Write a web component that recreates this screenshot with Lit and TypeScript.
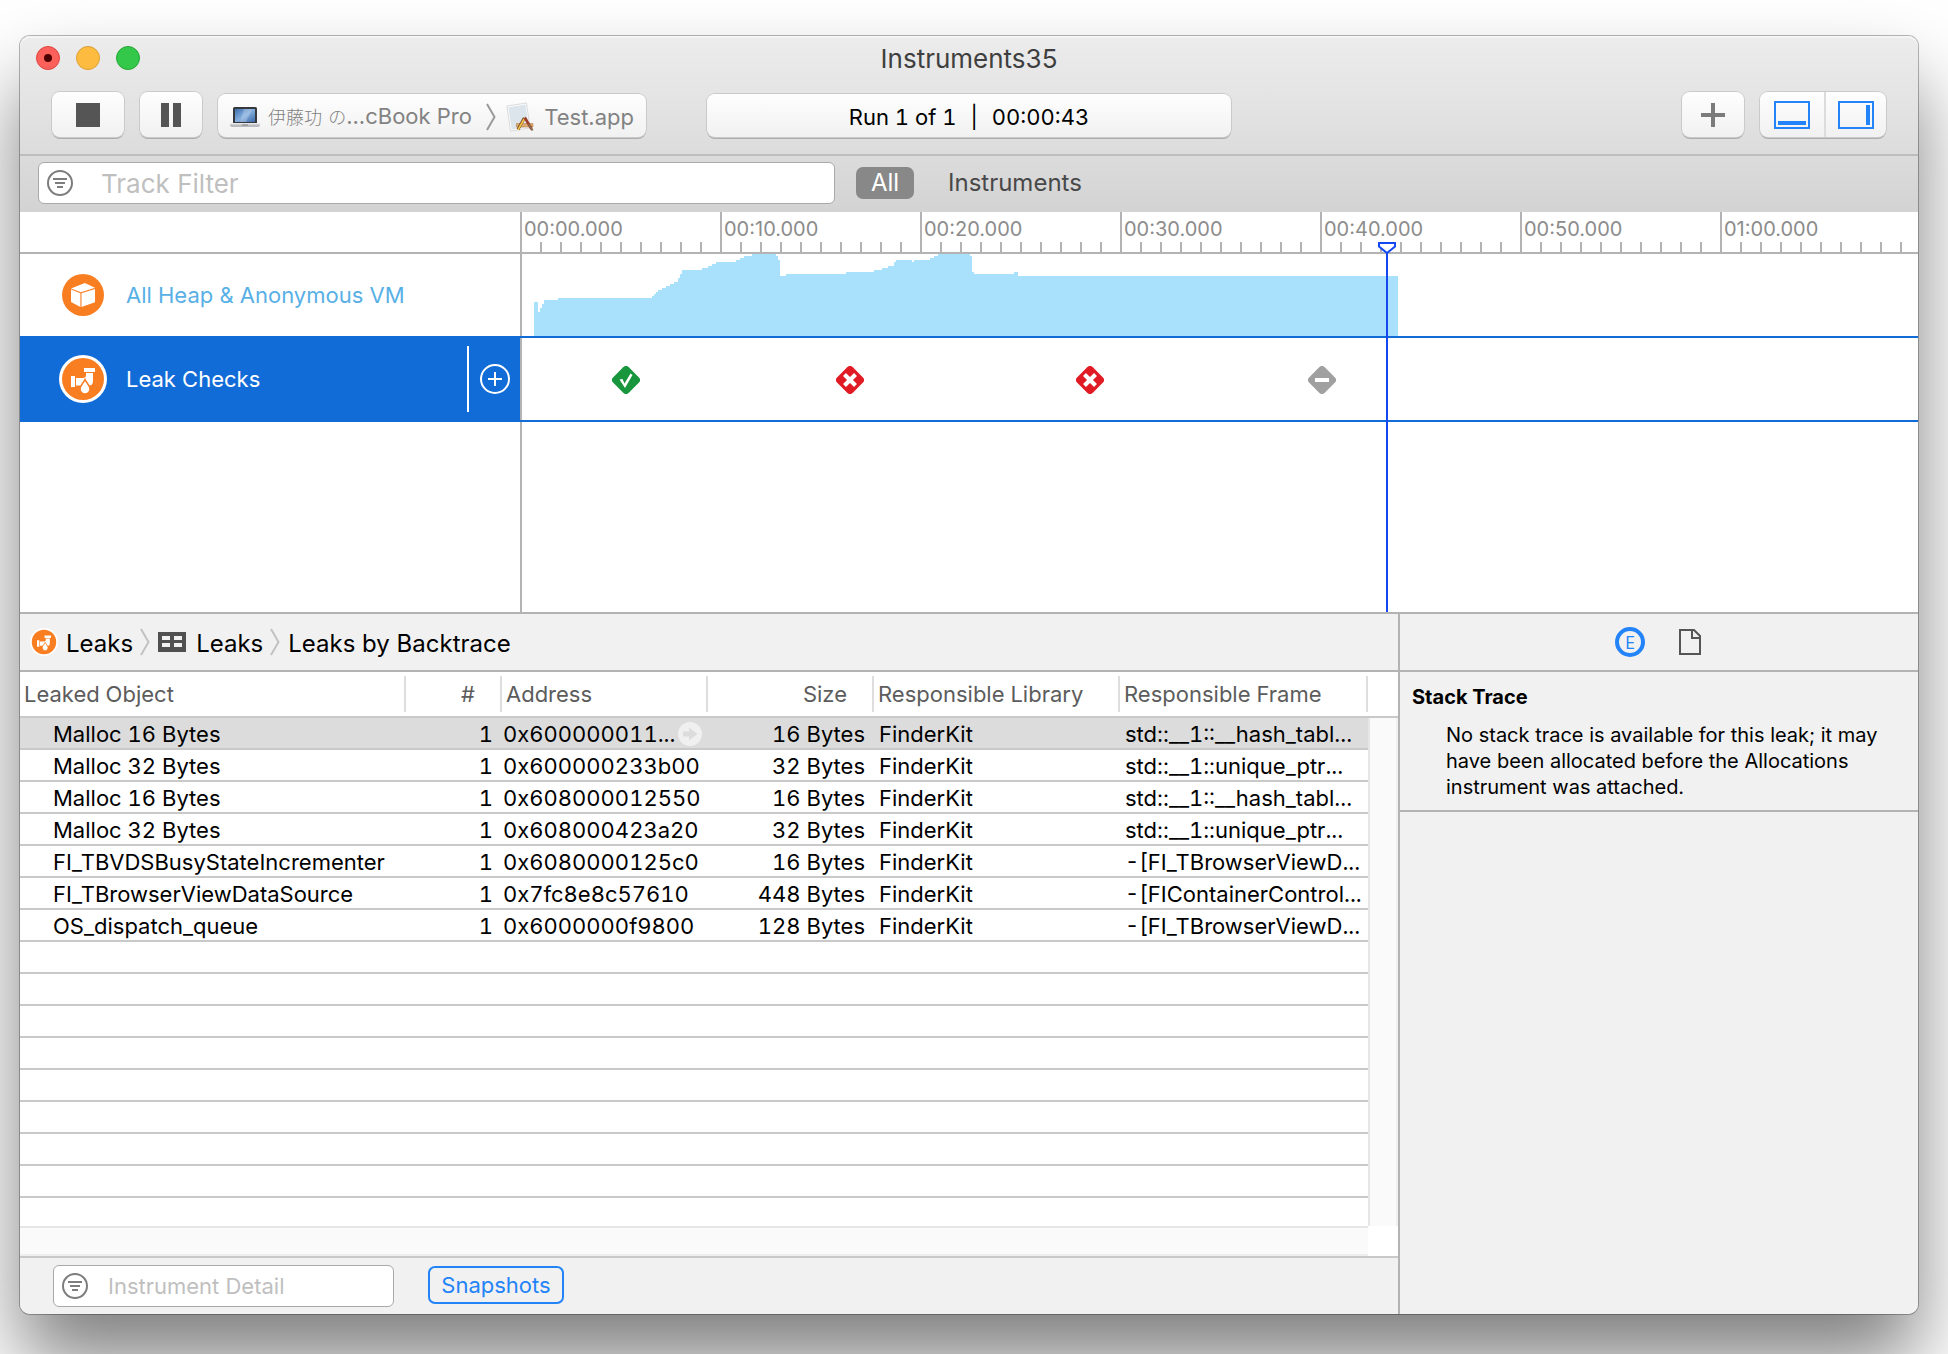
import { LitElement, html, css, svg } from "lit";
import { customElement, state } from "lit/decorators.js";
import { classMap } from "lit/directives/class-map.js";

interface Leak {
  object: string;
  count: number;
  address: string;
  size: string;
  library: string;
  frame: string;
}

const LEAKS: Leak[] = [
  { object: "Malloc 16 Bytes", count: 1, address: "0x600000011...", size: "16 Bytes", library: "FinderKit", frame: "std::__1::__hash_tabl..." },
  { object: "Malloc 32 Bytes", count: 1, address: "0x600000233b00", size: "32 Bytes", library: "FinderKit", frame: "std::__1::unique_ptr..." },
  { object: "Malloc 16 Bytes", count: 1, address: "0x608000012550", size: "16 Bytes", library: "FinderKit", frame: "std::__1::__hash_tabl..." },
  { object: "Malloc 32 Bytes", count: 1, address: "0x608000423a20", size: "32 Bytes", library: "FinderKit", frame: "std::__1::unique_ptr..." },
  { object: "FI_TBVDSBusyStateIncrementer", count: 1, address: "0x6080000125c0", size: "16 Bytes", library: "FinderKit", frame: "-[FI_TBrowserViewD..." },
  { object: "FI_TBrowserViewDataSource", count: 1, address: "0x7fc8e8c57610", size: "448 Bytes", library: "FinderKit", frame: "-[FIContainerControl..." },
  { object: "OS_dispatch_queue", count: 1, address: "0x6000000f9800", size: "128 Bytes", library: "FinderKit", frame: "-[FI_TBrowserViewD..." },
];

const MARKS = ["00:00.000", "00:10.000", "00:20.000", "00:30.000", "00:40.000", "00:50.000", "01:00.000"];

/* Timeline scale: pixels for one second. */
const SCALE = 20;

type CheckKind = "ok" | "leak" | "none";
const CHECKS: { x: number; kind: CheckKind; label: string }[] = [
  { x: 106, kind: "ok", label: "No new leaks" },
  { x: 330, kind: "leak", label: "New leaks" },
  { x: 570, kind: "leak", label: "New leaks" },
  { x: 802, kind: "none", label: "No change" },
];

/* Heap size over time: each step is [start x, top y] in lane pixels. */
const HEAP: [number, number][] = [
  [14, 48], [18, 58], [20, 54], [22, 50], [24, 46], [38, 44], [132, 42], [134, 40], [136, 38], [138, 36], [142, 34],
  [146, 32], [150, 30], [154, 28], [158, 24], [160, 20], [162, 16], [182, 14], [188, 12], [192, 10], [196, 8],
  [216, 6], [220, 4], [224, 2], [232, 0], [256, 2], [258, 6], [260, 22], [266, 20], [326, 18], [354, 16], [362, 14],
  [368, 12], [374, 8], [376, 6], [392, 8], [394, 6], [410, 4], [414, 2], [418, 0], [450, 2], [452, 18], [454, 20],
  [494, 18], [498, 22],
];
const HEAP_END = 878;
const LANE = 82;

const heapPath = () => {
  let d = `M${HEAP[0][0]} ${LANE}`;
  for (const [x, y] of HEAP) d += `H${x}V${y}`;
  return `${d}H${HEAP_END}V${LANE}Z`;
};

const filterIcon = html`<svg class="filter-icon" viewBox="0 0 26 26" aria-hidden="true">
  <circle cx="13" cy="13" r="12" fill="none" stroke="#7d7d7d" stroke-width="2" />
  <path d="M6 9h14M8 13h10M10 17h6" stroke="#7d7d7d" stroke-width="2" fill="none" />
</svg>`;

const boxIcon = html`<svg width="42" height="42" viewBox="0 0 42 42" aria-hidden="true">
  <circle cx="21" cy="21" r="21" fill="#f97e22" />
  <path d="M9 14.4 22.8 9 33 13.8 19 18.2Z" fill="#fff" />
  <path d="M9 15.4 18.4 19.2V33L9 28Z" fill="#fff" />
  <path d="M19.5 19.2 33 15V28.2L19.5 33Z" fill="#fff" />
</svg>`;

const faucetIcon = (size: number) => html`<svg width=${size} height=${size} viewBox="0 0 48 48" aria-hidden="true">
  <circle cx="24" cy="24" r="24" fill="#fff" />
  <circle cx="24" cy="24" r="21" fill="#f97e22" />
  <path d="M12 21h4v11h-4zM25 13h11v4H25z" fill="#fff" />
  <path d="M17 23h7c2 0 3-1 3-3v-2h7v8c0 3-1.500 4.500-4 4.500H17z" fill="#fff" />
  <path d="M26 24.500c1.500 3.500 5 6 5 9.500a5 5 0 0 1-10 0c0-3.500 3.500-6 5-9.500z" fill="#fff" stroke="#f97e22" stroke-width="1.500" />
</svg>`;

const chevron = (color: string) => html`<svg width="10" height="28" viewBox="0 0 10 28" aria-hidden="true">
  <path d="M1 1 8.500 14 1 27" fill="none" stroke=${color} stroke-width="2" />
</svg>`;

const laptopIcon = html`<svg width="30" height="22" viewBox="0 0 30 22" aria-hidden="true">
  <defs>
    <linearGradient id="screen" x1="0" y1="0" x2="1" y2="1">
      <stop offset="0" stop-color="#3f6fae" /><stop offset=".5" stop-color="#84aede" /><stop offset="1" stop-color="#3a68a8" />
    </linearGradient>
  </defs>
  <rect x="3" y="1" width="24" height="17" rx="1.500" fill="#35383d" />
  <rect x="5" y="3" width="20" height="13" fill="url(#screen)" />
  <path d="M14 3h8L16 16h-6z" fill="#fff" opacity=".22" />
  <path d="M0 17.500h30v1.500c0 1.500-1 2-3 2H3c-2 0-3-.5-3-2z" fill="#b9bbbe" />
  <path d="M0 17h30v1.500H0z" fill="#e6e7e9" />
  <path d="M12 18.500h6v1h-6z" fill="#7e8083" />
</svg>`;

const appIcon = html`<svg width="28" height="30" viewBox="0 0 28 30" aria-hidden="true">
  <path d="M1 4 20.500 1 24 26 4.500 29Z" fill="#fdfdfd" stroke="#cfd2d4" stroke-width=".8" />
  <path d="M2.500 5.200 19.500 2.600 22.600 24.800 5.700 27.500Z" fill="#dbe5eb" />
  <path d="M10.500 21.500h16.500v3.500H10.500z" fill="#dcab74" stroke="#a9763f" stroke-width=".5" />
  <path d="M18.300 16 12 27.500" stroke="#7d4a22" stroke-width="3" />
  <path d="M18.200 17 12 27.800" stroke="#f2c64b" stroke-width="1.700" />
  <path d="M18.800 15.500 25.500 27" stroke="#9c3d2b" stroke-width="2.600" />
  <path d="M22.500 22 26.500 28.500" stroke="#8a6a4a" stroke-width="2" />
</svg>`;

const checkIcon = (kind: CheckKind, label: string) => {
  const fill = kind === "ok" ? "#17963d" : kind === "leak" ? "#e01b24" : "#a0a0a0";
  const mark =
    kind === "ok"
      ? svg`<path d="M7.500 13.500 10.500 13l2 4.500L18.500 7.500l2 1.500-7.500 13z" fill="#fff" />`
      : kind === "leak"
        ? svg`<path d="M8.500 8.500l11 11M19.500 8.500l-11 11" stroke="#fff" stroke-width="4.200" />`
        : svg`<path d="M7 14h14" stroke="#fff" stroke-width="4" />`;
  return html`<svg width="28" height="28" viewBox="0 0 28 28" role="img" aria-label=${label}>
    <rect x="3" y="3" width="22" height="22" rx="4" transform="rotate(45 14 14)" fill=${fill} />
    ${mark}
  </svg>`;
};

@customElement("app-root")
export class AppRoot extends LitElement {
  @state() private selected = 0;

  static styles = css`
    :host {
      display: block;
      background: #fff;
      color: #000;
      font-family: Inter, "Noto Sans CJK JP", sans-serif;
      font-size: 22px;
      line-height: 28px;
      overflow: hidden;
    }
    * { box-sizing: border-box; }
    svg { display: block; flex: none; }
    button {
      font: inherit;
      color: inherit;
      margin: 0;
      padding: 0;
      border: 0;
      background: none;
      display: flex;
      align-items: center;
      justify-content: center;
    }
    .page {
      min-height: 100vh;
      padding: 36px 30px 40px 20px;
      display: flex;
    }
    .window {
      flex: 1;
      min-width: 0;
      display: flex;
      flex-direction: column;
      border-radius: 10px;
      background: #fff;
      box-shadow: 0 0 0 1px rgba(0, 0, 0, 0.28), 0 48px 80px rgba(0, 0, 0, 0.5);
    }

    /* Title bar and toolbar */
    .chrome {
      background: linear-gradient(#ececec, #e3e3e3 40%, #d3d3d3);
      border-radius: 10px 10px 0 0;
      box-shadow: inset 0 2px 0 #f4f4f4;
    }
    .titlebar {
      display: grid;
      grid-template-columns: 1fr auto 1fr;
      align-items: center;
      height: 46px;
      padding: 0 16px;
    }
    .lights { display: flex; gap: 16px; padding-bottom: 2px; }
    .light {
      width: 24px;
      height: 24px;
      border-radius: 50%;
      border: 1px solid;
    }
    .close { background: #fc605b; border-color: #e0453f; }
    .close::after {
      content: "";
      width: 8px;
      height: 8px;
      border-radius: 50%;
      background: #4d0000;
    }
    .minimize { background: #fdbc40; border-color: #dd9d33; }
    .zoom { background: #34c84a; border-color: #25a837; }
    h1 {
      margin: 0;
      font-size: 26px;
      line-height: 32px;
      font-weight: 400;
      color: #3f3f3f;
    }
    .toolbar {
      display: grid;
      grid-template-columns: minmax(0, 1fr) 524px minmax(0, 1fr);
      align-items: end;
      height: 74px;
      padding: 0 32px 17px;
      border-bottom: 2px solid #bdbdbd;
    }
    .group { display: flex; align-items: flex-end; gap: 16px; }
    .group.end { justify-content: flex-end; }
    .raised {
      height: 45px;
      border-radius: 8px;
      background: linear-gradient(#fefefe, #f1f1f1);
      box-shadow: 0 0 0 1px #cacaca, 0 2px 0 #adadad;
    }
    .stop { width: 72px; }
    .pause, .add { width: 62px; }
    .raised.target, .raised.status { height: 43px; padding-top: 2px; }
    .raised.target {
      display: flex;
      width: 428px;
      padding-left: 12px;
      padding-right: 12px;
      color: #828282;
      white-space: nowrap;
      text-align: left;
    }
    .target .device { margin-left: 8px; flex: 1; }
    .cjk { font-size: 18px; font-weight: 300; }
    .target .app { margin: 0 10px; }
    .status {
      display: flex;
      align-items: center;
      justify-content: center;
      gap: 14px;
      font-variant-numeric: tabular-nums;
    }
    .segments { display: flex; width: 126px; }
    .segments button { flex: 1; height: 45px; }
    .segments button:first-child { flex: 0 0 64px; }
    .segments button + button { border-left: 2px solid #dcdcdc; }

    /* Filter fields */
    .filterbar {
      display: flex;
      align-items: center;
      height: 56px;
      padding: 0 18px 2px;
    }
    .field {
      display: flex;
      align-items: center;
      height: 42px;
      padding-left: 8px;
      background: #fff;
      border: 1px solid #a9a9a9;
      border-radius: 6px;
    }
    .filter-icon { width: 26px; height: 26px; }
    .field input {
      flex: 1;
      min-width: 0;
      height: 100%;
      border: 0;
      padding: 0;
      background: none;
      outline: 0;
      font: inherit;
      color: #000;
    }
    .field input::placeholder { color: #bfbfbf; opacity: 1; }
    .track-field { flex: 0 0 43%; max-width: 797px; font-size: 26px; }
    .track-field input { margin-left: 28px; }
    .scope-all {
      width: 58px;
      height: 32px;
      margin: 0 34px 0 21px;
      border-radius: 7px;
      background: #888;
      color: #fff;
      font-size: 24px;
    }
    .scope-instruments { color: #484848; font-size: 24px; }

    /* Tracks */
    .tracks {
      display: grid;
      grid-template-columns: 500px minmax(0, 1fr);
      min-height: 402px;
      border-bottom: 2px solid #b3b3b3;
      background: #fff;
    }
    .names, .lanes { display: flex; flex-direction: column; }
    .corner { height: 42px; border-bottom: 2px solid #b3b3b3; }
    .name {
      display: flex;
      align-items: center;
      height: 82px;
      padding-left: 39px;
      color: #58b0e6;
    }
    .badge {
      width: 48px;
      margin-right: 19px;
      display: flex;
      justify-content: center;
    }
    .name.selected { height: 86px; background: #126cd7; color: #fff; }
    .name .label { flex: 1; }
    .divider { width: 2px; height: 66px; background: #fff; margin-right: 11px; }
    .pin { margin-right: 10px; }
    .lanes {
      position: relative;
      overflow: hidden;
      background: linear-gradient(#b3b3b3, #b3b3b3) left top / 2px 100% no-repeat;
    }
    .ruler {
      display: flex;
      height: 42px;
      border-bottom: 2px solid #b3b3b3;
      color: #8c8c8c;
      font-size: 20px;
      line-height: 20px;
    }
    .mark {
      flex: none;
      padding: 7px 0 0 2px;
      border-left: 2px solid #b3b3b3;
      background: repeating-linear-gradient(90deg, #b3b3b3 0 2px, transparent 2px 20px) left bottom / 100% 10px no-repeat border-box;
    }
    .lane { position: relative; height: 82px; }
    .lane.selected {
      height: 86px;
      border-top: 2px solid #126cd7;
      border-bottom: 2px solid #126cd7;
    }
    .check { position: absolute; top: 28px; margin-left: -14px; }
    .playhead {
      position: absolute;
      top: 40px;
      bottom: 0;
      width: 2px;
      background: #1548f0;
    }
    .handle { position: absolute; top: -10px; left: -8px; }

    /* Detail area */
    .detail {
      flex: 1;
      display: grid;
      grid-template-columns: minmax(0, 1fr) 520px;
    }
    .main { display: flex; flex-direction: column; min-width: 0; }
    .crumbs {
      display: flex;
      align-items: center;
      height: 58px;
      padding: 0 10px;
      background: #f1f1f1;
      border-bottom: 2px solid #b3b3b3;
      font-size: 24px;
    }
    .crumbs a {
      display: flex;
      align-items: center;
      gap: 8px;
      color: #000;
      text-decoration: none;
    }
    .crumbs a span { padding-top: 4px; }
    .crumbs a.kind { gap: 10px; }
    .crumbs > svg { margin: 0 8px 0 7px; }
    .sheet {
      flex: 1;
      display: grid;
      grid-template-columns: minmax(0, 1fr) 30px;
      grid-template-rows: 1fr 30px;
      border-bottom: 2px solid #c9c9c9;
    }
    .rows { display: flex; flex-direction: column; }
    table {
      width: 100%;
      table-layout: fixed;
      border-collapse: separate;
      border-spacing: 0;
      font-variant-numeric: tabular-nums;
    }
    .c-object { width: 386px; }
    .c-count { width: 96px; }
    .c-address { width: 206px; }
    .c-size { width: 166px; }
    .c-library { width: 246px; }
    th, td {
      padding: 0 4px;
      text-align: left;
      white-space: nowrap;
      overflow: hidden;
      font-weight: 400;
    }
    th {
      height: 46px;
      color: #5c5c5c;
      border-bottom: 2px solid #c9c9c9;
      background: linear-gradient(#dedede, #dedede) right center / 2px 36px no-repeat;
    }
    td {
      height: 32px;
      padding: 2px 0 0 5px;
      border-bottom: 2px solid #c9c9c9;
    }
    tr.selected td { background: #dcdcdc; }
    td.object { padding-left: 33px; }
    th.num { text-align: right; padding-right: 27px; }
    td.num { text-align: right; padding-right: 9px; }
    td.address { padding-left: 1px; }
    .address-cell { display: flex; align-items: center; gap: 3px; }
    .blank {
      flex: 1;
      background: repeating-linear-gradient(#fff 0 30px, #c9c9c9 30px 32px);
    }
    .vscroll { display: flex; flex-direction: column; }
    .vscroll-head { height: 46px; border-bottom: 2px solid #c9c9c9; }
    .vscroll-track {
      flex: 1;
      background: #fafafa;
      border-left: 2px solid #e6e6e6;
      border-right: 2px solid #f0f0f0;
    }
    .hscroll {
      background: #fafafa;
      border-top: 2px solid #e6e6e6;
      border-bottom: 2px solid #eee;
    }
    .footer {
      display: flex;
      align-items: center;
      gap: 34px;
      height: 56px;
      padding: 0 33px;
      background: #f1f1f1;
      border-radius: 0 0 0 10px;
    }
    .detail-field { width: 341px; }
    .detail-field input { margin-left: 20px; }
    .snapshots {
      width: 136px;
      height: 38px;
      margin-bottom: 2px;
      border: 2px solid #2383f8;
      border-radius: 7px;
      color: #2383f8;
    }

    /* Inspector */
    .inspector {
      background: #f1f1f1;
      border-left: 2px solid #b3b3b3;
      border-radius: 0 0 10px 0;
    }
    .tabs {
      display: flex;
      align-items: center;
      justify-content: center;
      gap: 34px;
      height: 58px;
      padding-right: 2px;
      border-bottom: 2px solid #b3b3b3;
    }
    .extended {
      width: 30px;
      height: 30px;
      border: 4px solid #2383f8;
      border-radius: 50%;
      color: #2383f8;
      font-family: "Open Sans", sans-serif;
      font-size: 18px;
      line-height: 20px;
    }
    .trace {
      padding: 12px 16px 10px 12px;
      border-bottom: 2px solid #b3b3b3;
      font-size: 20px;
      line-height: 26px;
    }
    h2 { margin: 0 0 12px; font-size: 20px; line-height: 26px; font-weight: 700; }
    .trace p { margin: 0; padding-left: 34px; }
  `;

  private renderChrome() {
    return html`<header class="chrome">
      <div class="titlebar">
        <div class="lights">
          <button class="light close" aria-label="Close"></button>
          <button class="light minimize" aria-label="Minimize"></button>
          <button class="light zoom" aria-label="Zoom"></button>
        </div>
        <h1>Instruments35</h1>
      </div>
      <div class="toolbar">
        <div class="group">
          <button class="raised stop" aria-label="Stop">
            <svg width="24" height="24" aria-hidden="true"><rect width="24" height="24" fill="#555" /></svg>
          </button>
          <button class="raised pause" aria-label="Pause">
            <svg width="20" height="24" aria-hidden="true"><path d="M0 0h8v24H0zM12 0h8v24h-8z" fill="#555" /></svg>
          </button>
          <button class="raised target">
            ${laptopIcon}
            <span class="device"><span class="cjk">伊藤功</span> <span class="cjk">の</span>...cBook Pro</span>
            ${chevron("#9a9a9a")}
            <span class="app">${appIcon}</span>
            <span>Test.app</span>
          </button>
        </div>
        <div class="raised status"><span>Run 1 of 1</span><span>|</span><span>00:00:43</span></div>
        <div class="group end">
          <button class="raised add" aria-label="Add instrument">
            <svg width="24" height="24" aria-hidden="true"><path d="M12 0v24M0 12h24" stroke="#7b7b7b" stroke-width="4" /></svg>
          </button>
          <div class="raised segments">
            <button aria-label="Toggle detail area">
              <svg width="36" height="28" aria-hidden="true">
                <rect x="1" y="1" width="34" height="26" fill="none" stroke="#2383f8" stroke-width="2" />
                <rect x="4" y="20" width="28" height="4" fill="#2383f8" />
              </svg>
            </button>
            <button aria-label="Toggle inspector">
              <svg width="36" height="28" aria-hidden="true">
                <rect x="1" y="1" width="34" height="26" fill="none" stroke="#2383f8" stroke-width="2" />
                <rect x="28" y="4" width="4" height="20" fill="#2383f8" />
              </svg>
            </button>
          </div>
        </div>
      </div>
      <div class="filterbar">
        <label class="field track-field">
          ${filterIcon}
          <input type="text" placeholder="Track Filter" aria-label="Track Filter" />
        </label>
        <button class="scope-all">All</button>
        <button class="scope-instruments">Instruments</button>
      </div>
    </header>`;
  }

  private renderTracks() {
    return html`<section class="tracks">
      <div class="names">
        <div class="corner"></div>
        <div class="name"><span class="badge">${boxIcon}</span><span class="label">All Heap &amp; Anonymous VM</span></div>
        <div class="name selected">
          <span class="badge">${faucetIcon(48)}</span><span class="label">Leak Checks</span>
          <span class="divider"></span>
          <button class="pin" aria-label="Pin track">
            <svg width="30" height="30" aria-hidden="true">
              <circle cx="15" cy="15" r="14" fill="none" stroke="#fff" stroke-width="2" />
              <path d="M15 8v14M8 15h14" stroke="#fff" stroke-width="2" />
            </svg>
          </button>
        </div>
      </div>
      <div class="lanes">
        <div class="ruler">${MARKS.map((m) => html`<div class="mark" style="width:${SCALE * 10}px">${m}</div>`)}</div>
        <div class="lane">
          <svg width=${HEAP_END} height=${LANE} shape-rendering="crispEdges" role="img" aria-label="Heap size">
            <path d=${heapPath()} fill="#a9e1fd" />
          </svg>
        </div>
        <div class="lane selected">
          ${CHECKS.map((c) => html`<span class="check" style="left:${c.x}px">${checkIcon(c.kind, c.label)}</span>`)}
        </div>
        <div class="playhead" style="left:866px">
          <svg class="handle" width="18" height="12" viewBox="0 0 18 12" aria-hidden="true">
            <path d="M1 1h16v3.500L9 11 1 4.500z" fill="#fff" stroke="#1548f0" stroke-width="2" />
          </svg>
        </div>
      </div>
    </section>`;
  }

  private renderRow(leak: Leak, i: number) {
    const on = i === this.selected;
    return html`<tr class=${classMap({ selected: on })} @click=${() => (this.selected = i)}>
      <td class="object">${leak.object}</td>
      <td class="num">${leak.count}</td>
      <td class="address">
        <span class="address-cell">${leak.address}${on
          ? html`<svg width="24" height="24" viewBox="0 0 24 24" aria-hidden="true">
              <circle cx="12" cy="12" r="12" fill="#f0f0f0" />
              <path d="M5 9.500h6V5.500L19.500 12 11 18.500v-4H5z" fill="#dcdcdc" />
            </svg>`
          : ""}</span>
      </td>
      <td class="num">${leak.size}</td>
      <td>${leak.library}</td>
      <td>${leak.frame}</td>
    </tr>`;
  }

  private renderDetail() {
    return html`<section class="detail">
      <div class="main">
        <nav class="crumbs" aria-label="Detail path">
          <a href="#leaks">${faucetIcon(28)}<span>Leaks</span></a>
          ${chevron("#c2c2c2")}
          <a class="kind" href="#table">
            <svg width="28" height="20" aria-hidden="true">
              <rect width="28" height="20" fill="#505050" />
              <path d="M4 4h8v4H4zM16 4h8v4h-8zM4 11h8v4H4zM16 11h8v4h-8z" fill="#f1f1f1" />
            </svg>
            <span>Leaks</span>
          </a>
          ${chevron("#c2c2c2")}
          <a href="#backtrace"><span>Leaks by Backtrace</span></a>
        </nav>
        <div class="sheet">
          <div class="rows">
            <table>
              <colgroup>
                <col class="c-object" /><col class="c-count" /><col class="c-address" />
                <col class="c-size" /><col class="c-library" /><col />
              </colgroup>
              <thead>
                <tr>
                  <th scope="col">Leaked Object</th>
                  <th scope="col" class="num">#</th>
                  <th scope="col">Address</th>
                  <th scope="col" class="num">Size</th>
                  <th scope="col">Responsible Library</th>
                  <th scope="col">Responsible Frame</th>
                </tr>
              </thead>
              <tbody>${LEAKS.map((l, i) => this.renderRow(l, i))}</tbody>
            </table>
            <div class="blank"></div>
          </div>
          <div class="vscroll"><div class="vscroll-head"></div><div class="vscroll-track"></div></div>
          <div class="hscroll"></div>
        </div>
        <footer class="footer">
          <label class="field detail-field">
            ${filterIcon}
            <input type="text" placeholder="Instrument Detail" aria-label="Instrument Detail" />
          </label>
          <button class="snapshots">Snapshots</button>
        </footer>
      </div>
      <aside class="inspector">
        <div class="tabs">
          <button class="extended" aria-label="Extended detail">E</button>
          <button aria-label="Run info">
            <svg width="22" height="26" aria-hidden="true">
              <path d="M1 1h14l6 6v18H1z" fill="none" stroke="#555" stroke-width="2" />
              <path d="M13 2v7h8" fill="none" stroke="#555" stroke-width="2" />
            </svg>
          </button>
        </div>
        <div class="trace">
          <h2>Stack Trace</h2>
          <p>No stack trace is available for this leak; it may have been allocated before the Allocations instrument was attached.</p>
        </div>
      </aside>
    </section>`;
  }

  render() {
    return html`<div class="page">
      <main class="window">${this.renderChrome()}${this.renderTracks()}${this.renderDetail()}</main>
    </div>`;
  }
}
